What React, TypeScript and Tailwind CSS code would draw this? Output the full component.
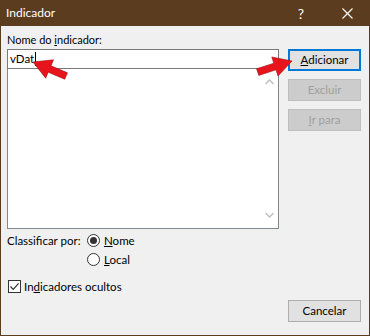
import React from 'react'

const font = "font-['Lato','Liberation_Sans',sans-serif]"

function Btn({ children, variant = 'normal' }: { children: React.ReactNode; variant?: 'normal' | 'default' | 'disabled' }) {
  const cls =
    variant === 'default'
      ? 'border-2 border-[#0078d7] bg-[#e1e1e1] text-black'
      : variant === 'disabled'
        ? 'border border-[#bfbfbf] bg-[#cccccc] text-[#a0a0a0]'
        : 'border border-[#adadad] bg-[#e1e1e1] text-black'
  return (
    <div className={`h-[22px] w-[73px] flex items-center justify-center text-[11.5px] leading-none ${cls}`}>
      {children}
    </div>
  )
}

function Radio({ checked, children }: { checked?: boolean; children: React.ReactNode }) {
  return (
    <div className="h-[19px] flex items-center">
      <span className="w-[13px] h-[13px] rounded-full border border-[#333333] bg-white flex items-center justify-center">
        {checked && <span className="w-[7px] h-[7px] rounded-full bg-[#333333]" />}
      </span>
      <span className="ml-[4px] text-[11.5px]">{children}</span>
    </div>
  )
}

export default function App() {
  return (
    <div className={`w-[370px] h-[336px] flex flex-col bg-[#5b3c1e] relative ${font}`}>
      {/* title bar */}
      <div className="h-[26px] flex items-center text-white">
        <span className="pl-[6px] text-[12px] flex-1">Indicador</span>
        <span className="w-[46px] h-[26px] flex items-center justify-center text-[14px]">?</span>
        <span className="w-[46px] h-[26px] flex items-center justify-center">
          <svg width="11" height="11" viewBox="0 0 11 11">
            <path d="M0.5 0.5 L10.5 10.5 M10.5 0.5 L0.5 10.5" stroke="white" strokeWidth="1.1" />
          </svg>
        </span>
      </div>

      {/* body */}
      <div className="flex-1 mx-[1px] mb-[1px] bg-[#f0f0f0] pl-[6px] pr-[8px] text-black">
        <div className="flex">
          <div className="w-[272px]">
            <div className="h-[23px] pt-[6px] text-[11px] leading-[16px]">
              Nome do <span className="underline">i</span>ndicador:
            </div>
            <div className="h-[20px] border border-[#7a7a7a] bg-white flex items-center pl-[2px] text-[11.5px]">
              vDat<span className="w-[1px] h-[14px] bg-black ml-[1px]" />
            </div>
            <div className="h-[160px] border border-t-0 border-[#828790] bg-white flex justify-end">
              <div className="w-[17px] flex flex-col items-center justify-between py-[10px]">
                <svg width="9" height="6" viewBox="0 0 9 6">
                  <path d="M0.5 5 L4.5 1 L8.5 5" stroke="#c0c0c0" strokeWidth="1.5" fill="none" />
                </svg>
                <svg width="9" height="6" viewBox="0 0 9 6">
                  <path d="M0.5 1 L4.5 5 L8.5 1" stroke="#c0c0c0" strokeWidth="1.5" fill="none" />
                </svg>
              </div>
            </div>
          </div>
          <div className="ml-[9px] pt-[23px] flex flex-col gap-[8px]">
            <Btn variant="default">
              <span><span className="underline">A</span>dicionar</span>
            </Btn>
            <Btn variant="disabled">Excluir</Btn>
            <Btn variant="disabled">
              <span><span className="underline">I</span>r para</span>
            </Btn>
          </div>
        </div>

        <div className="flex mt-[2px]">
          <div className="w-[80px] h-[19px] flex items-center text-[11.5px]">Classificar por:</div>
          <div className="flex flex-col">
            <Radio checked>
              <span className="underline">N</span>ome
            </Radio>
            <Radio>
              <span className="underline">L</span>ocal
            </Radio>
          </div>
        </div>

        <div className="mt-[8px] h-[19px] flex items-center">
          <span className="ml-[1px] w-[13px] h-[13px] border border-[#333333] bg-white flex items-center justify-center">
            <svg width="11" height="11" viewBox="0 0 11 11">
              <path d="M1.5 5.5 L4.2 8.3 L9.6 2.4" stroke="#333333" strokeWidth="1.2" fill="none" />
            </svg>
          </span>
          <span className="ml-[3px] text-[11.5px]">
            In<span className="underline">d</span>icadores ocultos
          </span>
        </div>

        <div className="mt-[4px] flex justify-end">
          <Btn>Cancelar</Btn>
        </div>
      </div>

      {/* red annotation arrows */}
      <svg className="absolute inset-0 pointer-events-none" width="370" height="336" viewBox="0 0 370 336">
        <polygon
          points="33,62 53.5,59.8 51,65.8 67.5,72.8 64.7,79.2 48.2,72.2 45.7,78.2"
          fill="#e8141b"
          stroke="#a30c10"
          strokeWidth="0.6"
        />
        <polygon
          points="292,61 271.8,57 273.8,63.2 256.6,68.8 258.8,75.4 276,69.8 278,76"
          fill="#e8141b"
          stroke="#a30c10"
          strokeWidth="0.6"
        />
      </svg>
    </div>
  )
}
